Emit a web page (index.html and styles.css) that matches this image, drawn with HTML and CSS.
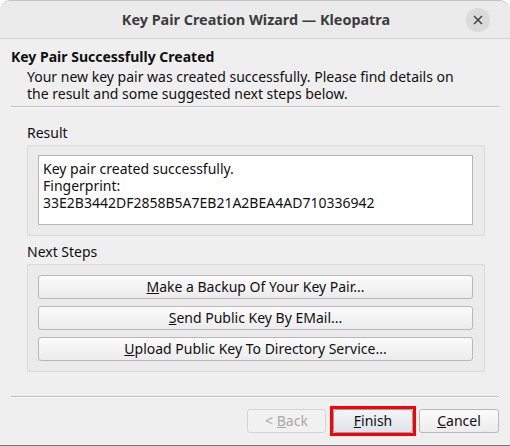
FILE: index.html
```html
<!DOCTYPE html>
<html>
<head>
<meta charset="utf-8">
<link rel="stylesheet" href="styles.css">
</head>
<body>
<div class="window">
  <div class="titlebar">
    <span class="title">Key Pair Creation Wizard — Kleopatra</span>
    <span class="close"><svg width="10" height="10" viewBox="0 0 10 10"><path d="M1 1L9 9M9 1L1 9" stroke="#3a3a3a" stroke-width="1.4" fill="none"/></svg></span>
  </div>
  <div class="page">
    <div class="header">
      <div class="heading">Key Pair Successfully Created</div>
      <div class="subtitle">Your new key pair was created successfully. Please find details on the result and some suggested next steps below.</div>
    </div>
    <div class="sep"></div>
    <div class="section">
      <div class="label">Result</div>
      <div class="group">
        <div class="textbox">Key pair created successfully.<br>Fingerprint:<br>33E2B3442DF2858B5A7EB21A2BEA4AD710336942</div>
      </div>
      <div class="label">Next Steps</div>
      <div class="group steps">
        <button class="btn wide"><u>M</u>ake a Backup Of Your Key Pair...</button>
        <button class="btn wide"><u>S</u>end Public Key By EMail...</button>
        <button class="btn wide"><u>U</u>pload Public Key To Directory Service...</button>
      </div>
    </div>
    <div class="sep bottom-sep"></div>
    <div class="footer">
      <button class="btn small disabled">&lt; <u>B</u>ack</button>
      <span class="focus"><button class="btn small default"><u>F</u>inish</button></span>
      <button class="btn small"><u>C</u>ancel</button>
    </div>
  </div>
</div>
</body>
</html>
```
FILE: styles.css
```css
* { box-sizing: border-box; }
html, body { margin: 0; padding: 0; background: #ffffff; }
body {
  font-family: "Noto Sans", "Open Sans", sans-serif;
  font-size: 14px;
  color: #101010;
}
.window {
  width: 510px;
  height: 446px;
  background: #efefef;
  border-top: 1px solid #c4c4c4;
  border-radius: 11px 11px 0 0;
  border-bottom: 1px solid #7a7a7a;
  display: flex;
  flex-direction: column;
  overflow: hidden;
}
.titlebar {
  height: 38px;
  flex: none;
  background: #ebebeb;
  border-bottom: 1px solid #d2d2d2;
  display: flex;
  align-items: center;
  justify-content: center;
  position: relative;
}
.title {
  font-weight: bold;
  font-size: 14.4px;
  color: #3b3b3b;
  margin-left: 2px;
}
.close {
  position: absolute;
  right: 20px;
  top: 7px;
  width: 24px;
  height: 24px;
  border-radius: 50%;
  background: #dadada;
  display: flex;
  align-items: center;
  justify-content: center;
}
.page {
  flex: 1;
  display: flex;
  flex-direction: column;
  padding: 9px 11px 0 11px;
}
.header { line-height: 17px; }
.heading { font-weight: bold; color: #101010; }
.subtitle { padding-left: 16px; margin-top: 3px; max-width: 456px; }
.sep {
  background: #c2c2c2;
  margin-top: 4px;
  border-bottom: 1px solid #fafafa;
  height: 2px;
}
.section { padding: 16px 14px 0 16px; }
.label { line-height: 17px; margin-bottom: 4px; }
.group {
  border: 1px solid #d9d9d9;
  background: #ebebeb;
  border-radius: 2px;
  padding: 9px 11px 10px 10px;
  margin-bottom: 7px;
}
.textbox {
  background: #ffffff;
  border: 1px solid #b6b6b6;
  height: 70px;
  padding: 4px 4px;
  line-height: 17px;
}
.steps {
  display: flex;
  flex-direction: column;
  gap: 7px;
  padding-top: 10px;
  padding-bottom: 10px;
}
.btn {
  font-family: inherit;
  font-size: 14px;
  color: #101010;
  height: 24px;
  border: 1px solid #b8b8b8;
  border-radius: 3px;
  background: linear-gradient(#fbfbfb, #ececec);
  padding: 0;
  line-height: 20px;
}
.btn.wide { width: 100%; }
.bottom-sep { margin-top: 17px; }
.footer {
  display: flex;
  justify-content: flex-end;
  align-items: center;
  padding-top: 8px;
}
.btn.small { width: 80px; }
.btn.disabled {
  color: #a9a9a9;
  border-color: #d4d4d4;
  background: #f1f1f1;
  width: 79px;
  margin-right: 4px;
}
.focus {
  border: 3px solid #ff0000;
  display: flex;
  margin-right: 3px;
}
.btn.default {
  background: linear-gradient(#f2f5f8, #dde4ea);
  border-color: #8e9fb0;
}
```
